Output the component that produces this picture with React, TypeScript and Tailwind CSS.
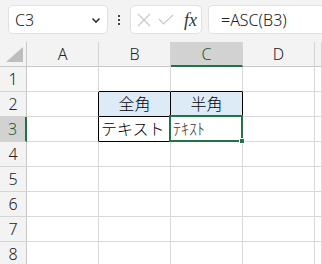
const cols = ["A", "B", "C", "D", ""];
const rows = [1, 2, 3, 4, 5, 6, 7, 8];
const grid = "grid grid-cols-[27px_72px_72px_72px_72px_1fr]";

// c: 1 = A, 2 = B, 3 = C ...
const Cell = ({ r, c }: { r: number; c: number }) => {
  const inTable = (r === 2 || r === 3) && (c === 2 || c === 3);
  const rightBlack = (r === 2 || r === 3) && c >= 1 && c <= 3;
  const bottomBlack = r >= 1 && r <= 3 && (c === 2 || c === 3);
  let content: React.ReactNode = null;
  if (r === 2 && c === 2) content = <span className="mx-auto">全角</span>;
  if (r === 2 && c === 3) content = <span className="mx-auto">半角</span>;
  if (r === 3 && c === 2) content = <span className="pl-[2px]">テキスト</span>;
  if (r === 3 && c === 3) content = <span className="pl-[2px] text-[#333]">ﾃｷｽﾄ</span>;
  return (
    <div
      className={`relative flex h-[25px] items-center border-b border-r text-[16px] font-light text-black ${
        rightBlack ? "border-r-black" : "border-r-[#d9d9d9]"
      } ${bottomBlack ? "border-b-black" : "border-b-[#d9d9d9]"} ${
        inTable && r === 2 ? "bg-[#ddebf7]" : "bg-white"
      }`}
    >
      {content}
      {r === 3 && c === 3 && (
        <div className="absolute -left-[2px] -top-[2px] z-10 h-[27px] w-[74px] border-2 border-[#217346]">
          <div className="absolute -bottom-[4px] -right-[4px] h-[6px] w-[6px] border border-white bg-[#217346]" />
        </div>
      )}
    </div>
  );
};

export default function App() {
  return (
    <div
      className="h-[264px] w-[322px] overflow-hidden bg-white"
      style={{ fontFamily: '"Noto Sans", "Noto Sans CJK JP", sans-serif' }}
    >
      <div className="flex h-[42px] items-start bg-[#f3f3f3] pt-[5px]">
        <div className="ml-[8px] flex h-[29px] w-[100px] items-center justify-between rounded-[5px] border border-[#e1e1e1] bg-white px-[6px] text-[16px] font-light text-[#222]">
          <span>C3</span>
          <svg width="10" height="8" viewBox="0 0 10 8">
            <path d="M1.5 2.5 L5 6 L8.5 2.5" fill="none" stroke="#333" strokeWidth="1.6" />
          </svg>
        </div>
        <div className="flex h-[29px] w-[22px] flex-col items-center justify-center gap-[2px]">
          <span className="h-[2px] w-[2px] bg-[#444]" />
          <span className="h-[2px] w-[2px] bg-[#444]" />
          <span className="h-[2px] w-[2px] bg-[#444]" />
        </div>
        <div className="flex h-[29px] w-[72px] items-center rounded-[5px] border border-[#e1e1e1] bg-white pl-[6px]">
          <svg width="14" height="14" viewBox="0 0 14 14">
            <path d="M1 1 L13 13 M13 1 L1 13" stroke="#c8c8c8" strokeWidth="1.2" fill="none" />
          </svg>
          <svg width="16" height="12" viewBox="0 0 16 12" className="ml-[7px]">
            <path d="M1 5 L5.5 10 L15 1" stroke="#c8c8c8" strokeWidth="1.2" fill="none" />
          </svg>
          <span
            className="ml-[10px] text-[18px] italic leading-none text-[#333]"
            style={{ fontFamily: '"Liberation Serif", serif' }}
          >
            fx
          </span>
        </div>
        <div className="ml-[6px] flex h-[29px] flex-1 items-center rounded-l-[5px] border border-r-0 border-[#e1e1e1] bg-white pl-[12px] text-[16px] font-light text-[#222]">
          =ASC(B3)
        </div>
      </div>
      <div className={grid}>
        <div className="relative h-[25px] border-b border-r border-[#c8c8c8] bg-[#f3f3f3]">
          <svg width="17" height="15" viewBox="0 0 17 15" className="absolute bottom-[4px] right-[3px]">
            <path d="M17 0 L17 15 L0 15 Z" fill="#bdbdbd" />
          </svg>
        </div>
        {cols.map((c, i) => (
          <div
            key={i}
            className={`flex h-[25px] items-center justify-center border-r border-r-[#d4d4d4] text-[16px] font-light ${
              c === "C"
                ? "border-b-2 border-b-[#217346] bg-[#d2d2d2] text-[#1e5a34]"
                : "border-b border-b-[#c8c8c8] bg-[#f3f3f3] text-[#222]"
            }`}
          >
            {c}
          </div>
        ))}
        {rows.map((r) => (
          <div key={r} className="contents">
            <div
              className={`flex h-[25px] items-center justify-center border-b border-b-[#d4d4d4] text-[16px] font-light ${
                r === 3
                  ? "border-r-2 border-r-[#217346] bg-[#d2d2d2] text-[#1e5a34]"
                  : "border-r border-r-[#c8c8c8] bg-[#f3f3f3] text-[#222]"
              }`}
            >
              {r}
            </div>
            {[1, 2, 3, 4, 5].map((c) => (
              <Cell key={c} r={r} c={c} />
            ))}
          </div>
        ))}
      </div>
    </div>
  );
}
